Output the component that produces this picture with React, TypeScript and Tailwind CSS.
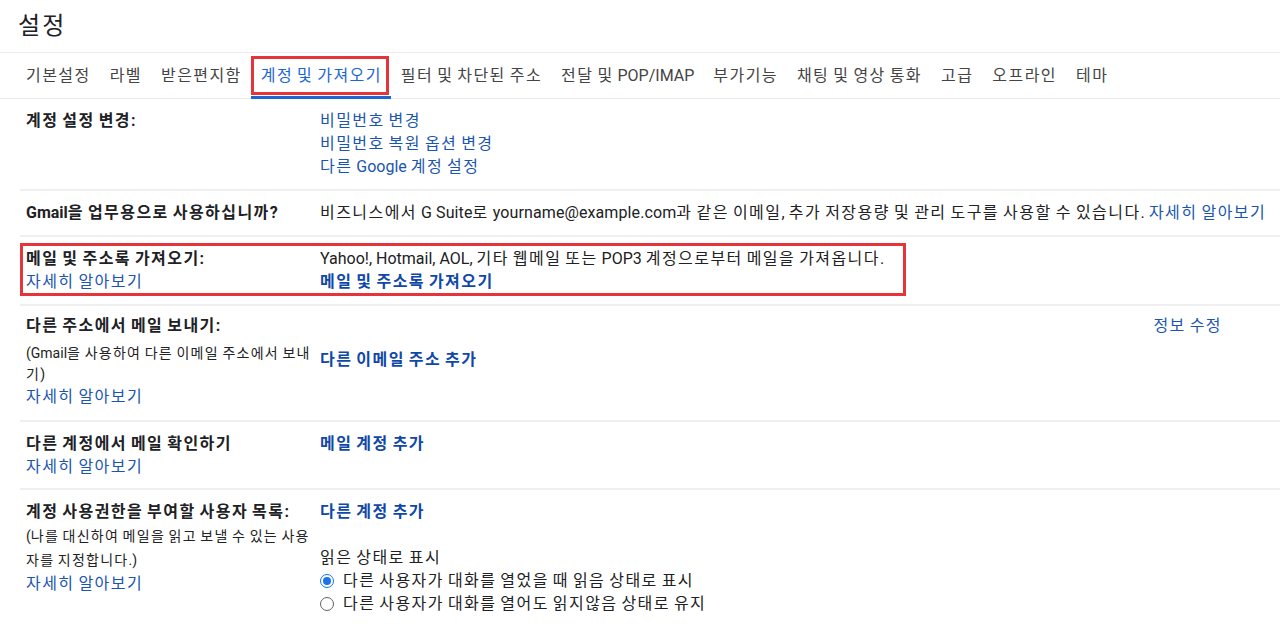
import React from "react";

const tabs = [
  "기본설정",
  "라벨",
  "받은편지함",
  "계정 및 가져오기",
  "필터 및 차단된 주소",
  "전달 및 POP/IMAP",
  "부가기능",
  "채팅 및 영상 통화",
  "고급",
  "오프라인",
  "테마",
];

const FONT = "font-['Roboto','Noto_Sans_CJK_KR',sans-serif]";

// hangul in the reference font is a bit wider than Noto CJK, so widen just those runs
function k(text: string) {
  return text.split(/([\uAC00-\uD7A3]+)/).map((part, i) =>
    /[\uAC00-\uD7A3]/.test(part) ? (
      <span key={i} className="tracking-[0.09em]">
        {part}
      </span>
    ) : (
      part
    )
  );
}

function Link({ children, bold }: { children: string; bold?: boolean }) {
  return (
    <span className={bold ? "font-bold text-[#0f48a8] cursor-pointer" : "text-[#1a55b0] cursor-pointer"}>
      {k(children)}
    </span>
  );
}

function Radio({ checked }: { checked?: boolean }) {
  return checked ? (
    <span className="w-[14px] h-[14px] rounded-full border-[1.5px] border-[#1a73e8] flex items-center justify-center">
      <span className="w-[8px] h-[8px] rounded-full bg-[#1a73e8]" />
    </span>
  ) : (
    <span className="w-[14px] h-[14px] rounded-full border border-[#5f6368]" />
  );
}

export default function App() {
  return (
    <div className={`${FONT} bg-white text-[#202124] w-[1280px] h-[639px] overflow-hidden`}>
      {/* Title */}
      <div className="h-[52px] px-[18px] flex items-center text-[24px]">
        <span>{k("설정")}</span>
      </div>

      {/* Tabs */}
      <div className="h-[47px] border-y border-[#ececec] flex pl-[16.5px] text-[16px]">
        {tabs.map((t, i) => {
          const active = i === 3;
          return (
            <div
              key={t}
              className={`relative px-[9.5px] flex items-center whitespace-nowrap ${active ? "text-[#1a66d6]" : "text-[#444]"}`}
            >
              <span>{k(t)}</span>
              {active && (
                <>
                  <span className="absolute left-0 right-0 bottom-[-1px] h-[3px] bg-[#1a66d6]" />
                  <span className="absolute left-0 right-[2px] top-[3px] bottom-[3px] border-[3px] border-[#e5343a]" />
                </>
              )}
            </div>
          );
        })}
      </div>

      {/* Rows */}
      <div className="ml-[20px] text-[16px] leading-[23px]">
        {/* Row 1 */}
        <div className="flex border-b-2 border-[#efefef] pt-[10px] pb-[11px]">
          <div className="w-[300px] pl-[6px] font-bold">{k("계정 설정 변경:")}</div>
          <div className="flex flex-col">
            <Link>비밀번호 변경</Link>
            <Link>비밀번호 복원 옵션 변경</Link>
            <Link>다른 Google 계정 설정</Link>
          </div>
        </div>

        {/* Row 2 */}
        <div className="flex border-b-2 border-[#efefef] pt-[10px] pb-[11px]">
          <div className="w-[300px] pl-[6px] font-bold">{k("Gmail을 업무용으로 사용하십니까?")}</div>
          <div className="whitespace-nowrap tracking-[0.1px]">
            {k("비즈니스에서 G Suite로 yourname@example.com과 같은 이메일, 추가 저장용량 및 관리 도구를 사용할 수 있습니다. ")}
            <Link>자세히 알아보기</Link>
          </div>
        </div>

        {/* Row 3 */}
        <div className="relative flex border-b-2 border-[#efefef] pt-[10px] pb-[11px]">
          <div className="w-[300px] pl-[6px] flex flex-col">
            <span className="font-bold">{k("메일 및 주소록 가져오기:")}</span>
            <Link>자세히 알아보기</Link>
          </div>
          <div className="flex flex-col">
            <span>{k("Yahoo!, Hotmail, AOL, 기타 웹메일 또는 POP3 계정으로부터 메일을 가져옵니다.")}</span>
            <Link bold>메일 및 주소록 가져오기</Link>
          </div>
          <span className="absolute left-0 top-[6px] w-[886px] h-[53px] border-[3px] border-[#e5343a]" />
        </div>

        {/* Row 4 */}
        <div className="flex border-b-2 border-[#efefef] pt-[8px] pb-[12px]">
          <div className="w-[300px] pl-[6px] flex flex-col">
            <span className="font-bold">{k("다른 주소에서 메일 보내기:")}</span>
            <span className="text-[14px] leading-[21px] mt-[6px] text-[#222]">
              {k("(Gmail을 사용하여 다른 이메일 주소에서 보내")}
              <br />
              {k("기)")}
            </span>
            <Link>자세히 알아보기</Link>
          </div>
          <div className="flex-1 flex flex-col">
            <div className="flex justify-end pr-[58px]">
              <Link>정보 수정</Link>
            </div>
            <div className="mt-[11px]">
              <Link bold>다른 이메일 주소 추가</Link>
            </div>
          </div>
        </div>

        {/* Row 5 */}
        <div className="flex border-b-2 border-[#efefef] pt-[10px] pb-[10px]">
          <div className="w-[300px] pl-[6px] flex flex-col">
            <span className="font-bold">{k("다른 계정에서 메일 확인하기")}</span>
            <Link>자세히 알아보기</Link>
          </div>
          <div>
            <Link bold>메일 계정 추가</Link>
          </div>
        </div>

        {/* Row 6 */}
        <div className="flex pt-[10px] pb-[12px]">
          <div className="w-[300px] pl-[6px] flex flex-col">
            <span className="font-bold">{k("계정 사용권한을 부여할 사용자 목록:")}</span>
            <span className="text-[14px] leading-[24px] mt-[1px] text-[#222]">
              {k("(나를 대신하여 메일을 읽고 보낼 수 있는 사용")}
              <br />
              {k("자를 지정합니다.)")}
            </span>
            <Link>자세히 알아보기</Link>
          </div>
          <div className="flex flex-col">
            <Link bold>다른 계정 추가</Link>
            <span className="mt-[23px]">{k("읽은 상태로 표시")}</span>
            <label className="flex items-center gap-[9px]">
              <Radio checked />
              <span>{k("다른 사용자가 대화를 열었을 때 읽음 상태로 표시")}</span>
            </label>
            <label className="flex items-center gap-[9px]">
              <Radio />
              <span>{k("다른 사용자가 대화를 열어도 읽지않음 상태로 유지")}</span>
            </label>
          </div>
        </div>
      </div>
    </div>
  );
}
